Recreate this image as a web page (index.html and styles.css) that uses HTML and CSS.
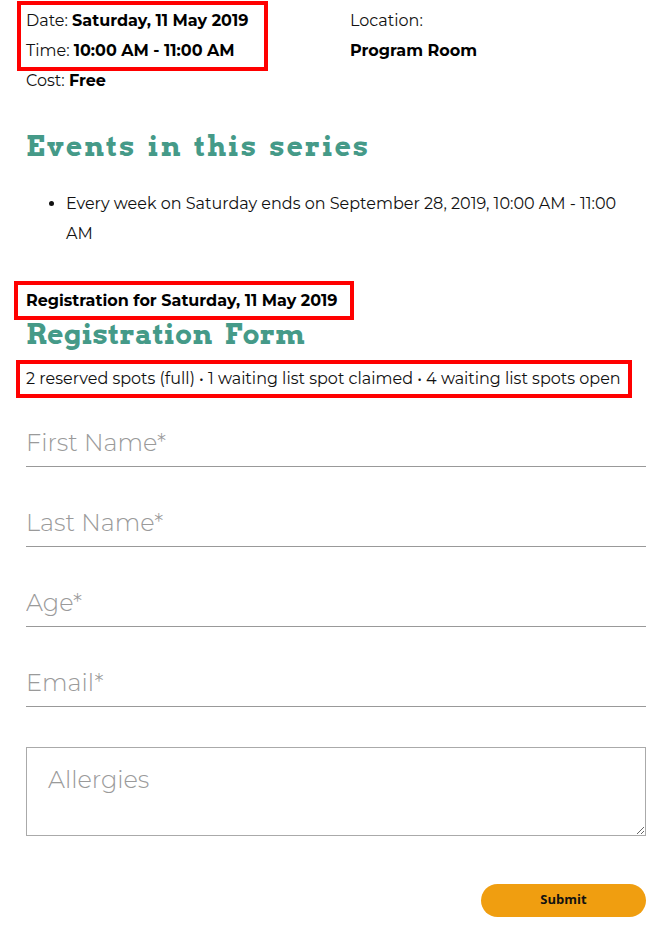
FILE: index.html
```html
<!DOCTYPE html>
<html>
<head>
<meta charset="utf-8">
<link rel="stylesheet" href="styles.css">
</head>
<body>
<div class="page">
  <div class="meta">
    <div class="meta-col">
      <div class="hl hl-when">
        <div class="line">Date: <b>Saturday, 11 May 2019</b></div>
        <div class="line">Time: <b>10:00 AM - 11:00 AM</b></div>
      </div>
      <div class="line">Cost: <b>Free</b></div>
    </div>
    <div class="meta-col loc">
      <div class="line">Location:</div>
      <div class="line"><b>Program Room</b></div>
    </div>
  </div>

  <h2 class="heading series-h">Events in this series</h2>
  <ul class="series">
    <li>Every week on Saturday ends on September 28, 2019, 10:00 AM - 11:00 AM</li>
  </ul>

  <div class="reg-for"><span class="hl hl-reg">Registration for Saturday, 11 May 2019</span></div>
  <h2 class="heading form-h">Registration Form</h2>
  <div class="spots"><span class="hl hl-spots">2 reserved spots (full) • 1 waiting list spot claimed • 4 waiting list spots open</span></div>

  <form class="form">
    <input class="field" type="text" placeholder="First Name*">
    <input class="field" type="text" placeholder="Last Name*">
    <input class="field" type="text" placeholder="Age*">
    <input class="field" type="text" placeholder="Email*">
    <textarea class="area" placeholder="Allergies"></textarea>
    <div class="actions"><button type="button" class="submit">Submit</button></div>
  </form>
</div>
</body>
</html>
```

FILE: styles.css
```css
html, body { margin: 0; padding: 0; background: #fff; }
body {
  font-family: "Montserrat", "Open Sans", sans-serif;
  font-size: 16px;
  color: #111;
}
.page {
  width: 620px;
  padding: 6px 0 0 26px;
}
.meta { display: flex; }
.meta-col { flex: none; width: 324px; }
.line { line-height: 30px; }
b { font-weight: 700; color: #000; }
.hl { outline: 4px solid #f00; }
.hl-when {
  width: fit-content;
  outline-offset: 1px;
  margin-left: -4px;
  padding: 0 15px 0 4px;
}
.heading {
  font-family: "Arvo", "Rokkitt", "Roboto Slab", "DejaVu Serif", serif;
  font-weight: 700;
  color: #459a88;
  font-size: 28px;
  margin: 0;
  letter-spacing: 0.3px;
}
.series-h { margin-top: 30px; line-height: 40px; letter-spacing: 2px; word-spacing: 4px; }
.series {
  margin: 23px 0 0 0;
  padding-left: 40px;
  line-height: 30px;
}
.reg-for { margin-top: 36px; font-weight: 700; color: #000; }
.hl-reg {
  display: block;
  width: fit-content;
  line-height: 23px;
  padding: 4px 12px 4px 8px;
  margin-left: -8px;
}
.form-h { line-height: 36px; margin-top: 0; word-spacing: 6px; }
.spots { margin-top: 12px; }
.hl-spots {
  display: block;
  width: fit-content;
  line-height: 24px;
  padding: 3px 7px 3px 6px;
  margin-left: -6px;
}
.form { display: flex; flex-direction: column; margin-top: 24px; }
.field {
  font-family: inherit;
  font-size: 24px;
  font-weight: 300;
  border: 0;
  border-bottom: 1px solid #999;
  height: 48px;
  padding: 0;
  margin: 0 0 31px 0;
  outline: none;
  background: transparent;
}
.field::placeholder, .area::placeholder { color: #9a9a9a; font-weight: 300; }
.area {
  font-family: inherit;
  font-size: 24px;
  font-weight: 300;
  height: 89px;
  border: 1px solid #aaa;
  padding: 17px 21px;
  box-sizing: border-box;
  margin: 9px 0 0 0;
}
.actions { display: flex; justify-content: flex-end; margin-top: 48px; }
.submit {
  width: 165px;
  height: 33px;
  border: 0;
  border-radius: 17px;
  background: #f09e10;
  font-family: "Open Sans", sans-serif;
  font-weight: 700;
  font-size: 13px;
  color: #111;
  padding: 0 0 3px 0;
}
```
